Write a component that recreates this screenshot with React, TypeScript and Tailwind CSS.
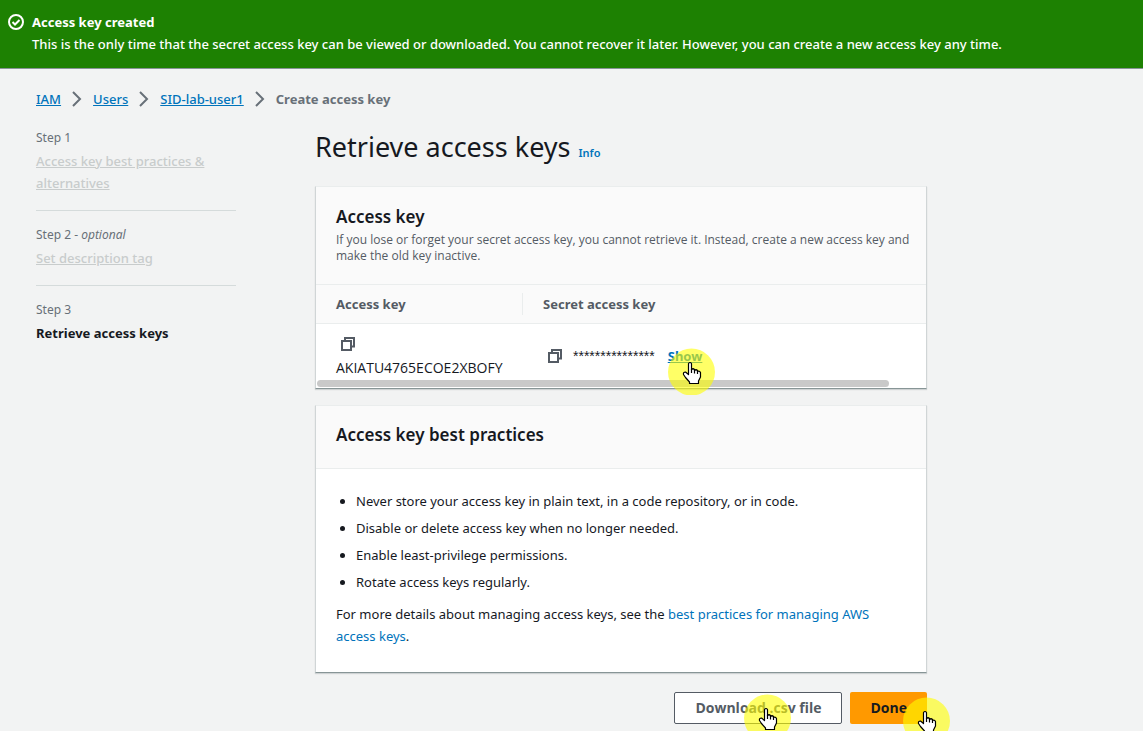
import type { ReactNode } from "react";

function Pointer({ className }: { className: string }) {
  return (
    <span aria-hidden="true" className={`pointer-events-none absolute z-10 size-[47px] ${className}`}>
      <svg viewBox="0 0 47 47" className="size-full">
        <circle cx="23.5" cy="24" r="23.5" fill="#ffff00" fillOpacity="0.6" />
        <path
          d="M20.500 15.500Q22 13.500 23.500 15.500V21.500Q25 20 26.500 21.500V22.500Q28 21 29.500 22.500V23.500Q31.500 22.500 32.500 24.500V29L30.500 33V35.500H21.500V34L17.500 29.500L15.500 26.500Q15 24 17.500 24L20.500 26.500Z"
          fill="#fff" stroke="#000" strokeWidth="1.2" strokeLinejoin="round"
        />
        <path d="M23.500 21V25M26.500 21.500V25.500M29.500 22.500V26" stroke="#000" strokeWidth="1.2" fill="none" />
      </svg>
    </span>
  );
}

function CopyButton({ label }: { label: string }) {
  return (
    <button type="button" aria-label={label} className="block p-1 text-[#545b64]">
      <svg viewBox="0 0 16 16" className="size-4" fill="none" stroke="currentColor" strokeWidth="2">
        <path d="M2 5h9v9H2z" />
        <path d="M5 5V2h9v8.500h-3" />
      </svg>
    </button>
  );
}

function Chevron() {
  return (
    <svg viewBox="0 0 16 16" className="size-4" fill="none" stroke="#687078" strokeWidth="2" aria-hidden="true">
      <path d="M4 1l7 7-7 7" />
    </svg>
  );
}

function Card({ children }: { children: ReactNode }) {
  return (
    <section className="border border-t-[#eaeded] border-x-[#d0d5d6] border-b-[#879596] bg-white shadow-[0_1px_1px_rgba(0,28,36,0.15)]">
      {children}
    </section>
  );
}

const crumbs = ["IAM", "Users", "SID-lab-user1"];

const practices = [
  "Never store your access key in plain text, in a code repository, or in code.",
  "Disable or delete access key when no longer needed.",
  "Enable least-privilege permissions.",
  "Rotate access keys regularly.",
];

export default function App() {
  return (
    <div className="relative min-h-screen overflow-hidden bg-[#f2f3f3] font-['Noto_Sans','Open_Sans',sans-serif] text-[13px] leading-[22px] font-medium text-[#16191f]">
      <div role="status" className="flex gap-2 border-b border-[#879596] bg-[#1d8102] px-2 pt-[11px] pb-[13px] text-white">
        <svg viewBox="0 0 16 16" className="mt-[3px] size-4 shrink-0" fill="none" stroke="currentColor" strokeWidth="2" aria-hidden="true">
          <circle cx="8" cy="8" r="7" />
          <path d="M4.500 8l2.500 2.500 4.500-4.500" />
        </svg>
        <div>
          <h2 className="font-bold">Access key created</h2>
          <p>
            This is the only time that the secret access key can be viewed or downloaded. You cannot recover it later. However, you can create a new access key any time.
          </p>
        </div>
      </div>

      <div className="px-9 pt-[19px]">
        <nav aria-label="Breadcrumbs">
          <ol className="flex items-center">
            {crumbs.map((c) => (
              <li key={c} className="flex items-center">
                <a href="#" className="text-[#0073bb] underline">{c}</a>
                <span className="px-2"><Chevron /></span>
              </li>
            ))}
            <li aria-current="page" className="font-bold text-[#687078]">Create access key</li>
          </ol>
        </nav>

        <div className="flex gap-[79px] pt-[17px]">
          <nav aria-label="Steps" className="w-[200px] shrink-0">
            <ol className="divide-y divide-[#d5dbdb]">
              <li className="pb-4">
                <p className="text-xs leading-[22px] font-normal text-[#687078]">Step 1</p>
                <a href="#" className="mt-px block text-[#c8cccc] underline">Access key best practices &amp; alternatives</a>
              </li>
              <li className="py-4">
                <p className="text-xs leading-[16px] font-normal text-[#687078]">Step 2 - <em>optional</em></p>
                <a href="#" className="mt-1 block text-[#c8cccc] underline">Set description tag</a>
              </li>
              <li className="pt-4">
                <p className="text-xs leading-[16px] font-normal text-[#687078]">Step 3</p>
                <p className="mt-1 font-bold">Retrieve access keys</p>
              </li>
            </ol>
          </nav>

          <main className="max-w-[612px] min-w-0 flex-1">
            <div className="flex items-baseline gap-2 pt-0.5">
              <h1 className="text-[27px] leading-9 font-normal">Retrieve access keys</h1>
              <a href="#" className="text-[11px] font-semibold text-[#0073bb]">Info</a>
            </div>

            <div className="mt-[21px] flex flex-col gap-4">
              <Card>
                <header className="border-b border-[#eaeded] bg-[#fafafa] pt-[19px] pr-3 pb-5 pl-5">
                  <h2 className="text-[17px] font-semibold">Access key</h2>
                  <p className="mt-1 font-['Open_Sans',sans-serif] text-xs leading-4 font-normal text-[#545b64]">
                    If you lose or forget your secret access key, you cannot retrieve it. Instead, create a new access key and make the old key inactive.
                  </p>
                </header>
                <table className="w-full text-left">
                  <thead className="border-b border-[#eaeded] bg-[#fafafa] text-[#545b64]">
                    <tr>
                      <th className="w-[207px] py-2 pl-5 font-bold"><div className="border-r border-[#eaeded]">Access key</div></th>
                      <th className="py-2 pl-5 font-bold">Secret access key</th>
                    </tr>
                  </thead>
                  <tbody>
                    <tr>
                      <td className="pt-2 pb-px pl-5">
                        <CopyButton label="Copy access key" />
                        <div className="pt-px font-['Open_Sans',sans-serif] text-sm leading-[22px] font-normal">AKIATU4765ECOE2XBOFY</div>
                      </td>
                      <td className="pt-2 pl-5">
                        <div className="flex items-center">
                          <CopyButton label="Copy secret access key" />
                          <span className="ml-1.5 font-['Liberation_Sans',sans-serif] text-sm">***************</span>
                          <span className="relative ml-[13px]">
                            <button type="button" className="font-bold text-[#0073bb] underline">Show</button>
                            <Pointer className="top-[3px] left-0" />
                          </span>
                        </div>
                      </td>
                    </tr>
                  </tbody>
                </table>
                <div className="px-px pb-px"><div className="h-[7px] w-[94%] rounded-full bg-[#c9c9c9]" /></div>
              </Card>

              <Card>
                <header className="border-b border-[#eaeded] bg-[#fafafa] px-5 pt-[18px] pb-[22px]">
                  <h2 className="text-[17px] font-semibold">Access key best practices</h2>
                </header>
                <div className="px-5 pt-[21px] pb-[25px] font-normal">
                  <ul className="list-disc pl-5">
                    {practices.map((p) => <li key={p} className="mb-[5px]">{p}</li>)}
                  </ul>
                  <p className="mt-2.5">
                    For more details about managing access keys, see the{" "}
                    <a href="#" className="text-[#0073bb]">best practices for managing AWS access keys</a>.
                  </p>
                </div>
              </Card>
            </div>

            <div className="mt-[19px] flex justify-end gap-2 font-['Open_Sans',sans-serif] text-sm font-bold">
              <div className="relative">
                <button type="button" className="h-8 rounded-[2px] border border-[#545b64] bg-white px-5 text-[#545b64]">Download .csv file</button>
                <Pointer className="top-[2px] left-[70px]" />
              </div>
              <div className="relative">
                <button type="button" className="h-8 rounded-[2px] bg-[#ff9900] px-5">Done</button>
                <Pointer className="top-[5px] left-[53px]" />
              </div>
            </div>
          </main>
        </div>
      </div>
    </div>
  );
}
